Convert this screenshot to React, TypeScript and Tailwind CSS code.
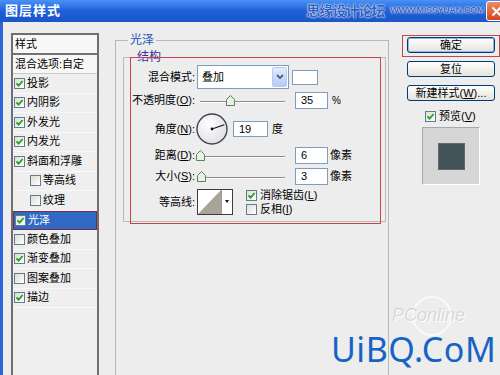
import type { ReactNode } from "react";

// Left list of layer styles
const layerStyles = [
  { name: "投影", checked: true },
  { name: "内阴影", checked: true },
  { name: "外发光", checked: true },
  { name: "内发光", checked: true },
  { name: "斜面和浮雕", checked: true },
  { name: "等高线", checked: false, indent: true },
  { name: "纹理", checked: false, indent: true },
  { name: "光泽", checked: true, selected: true },
  { name: "颜色叠加", checked: false },
  { name: "渐变叠加", checked: true },
  { name: "图案叠加", checked: false },
  { name: "描边", checked: true },
];

// XP style checkbox
function Check({ checked }: { checked: boolean }) {
  return (
    <span className="flex h-[11px] w-[11px] shrink-0 items-center justify-center border border-[#5d7d92] bg-linear-to-br from-[#dedcd4] to-white">
      {checked && (
        <svg width="9" height="9" viewBox="0 0 9 9">
          <path d="M1.5 4.3 L3.6 6.6 L7.6 2" fill="none" stroke="#21a121" strokeWidth="1.8" />
        </svg>
      )}
    </span>
  );
}

// Small underlined mnemonic, e.g. (O)
function Key({ k }: { k: string }) {
  return (
    <>
      (<span className="underline">{k}</span>)
    </>
  );
}

function TitleBar() {
  return (
    <div className="flex h-[22px] shrink-0 items-center bg-linear-to-b from-[#4a92f5] via-[#1f60d8] to-[#1b55c9] pl-[5px]">
      <span className="text-[13px] font-bold tracking-[1px] text-white">图层样式</span>
      <div className="ml-auto flex items-center gap-[6px] pr-[2px]">
        <span className="text-[14px] font-bold tracking-[-1px] text-[#2d5fc2] [text-shadow:0_0_2px_#fff,0_0_1px_#fff]">
          思缘设计论坛
        </span>
        <span className="text-[9px] font-bold tracking-[-0.3px] text-[#2d5fc2] [text-shadow:0_0_2px_#fff,0_0_1px_#fff]">
          WWW.MISSYUAN.COM
        </span>
      </div>
      <div className="-mr-[7px] flex h-[20px] w-[21px] shrink-0 items-center justify-center rounded-[3px] border border-white bg-linear-to-b from-[#f08a5c] to-[#d4431c]">
        <svg width="11" height="11" viewBox="0 0 11 11">
          <path d="M1.5 1.5 L9.5 9.5 M9.5 1.5 L1.5 9.5" stroke="#fff" strokeWidth="2" />
        </svg>
      </div>
    </div>
  );
}

function StyleList() {
  return (
    <div className="ml-[8px] mt-[11px] h-[350px] w-[88px] shrink-0 border-2 border-[#6f6f6f] bg-[#efefef] text-[11px] leading-none text-black">
      <div className="flex h-[20px] items-center border-b-2 border-[#737373] bg-[#f7f7f7] pl-[2px]">样式</div>
      <div className="flex h-[19px] items-center border-b border-[#c9c9c9] bg-[#f7f7f7] pl-[2px]">混合选项:自定</div>
      {layerStyles.map((item, index) => (
        <div
          key={index}
          className={
            item.selected
              ? "flex h-[19.5px] items-center gap-[2px] border border-[#7b2a4c] bg-[#316ac5] pl-[1px] text-white"
              : "flex h-[19.5px] items-center gap-[2px] border-b border-[#f9f9f9] " + (item.indent ? "pl-[17px]" : "pl-[1px]")
          }
        >
          <Check checked={item.checked} />
          <span>{item.name}</span>
        </div>
      ))}
    </div>
  );
}

// Horizontal slider, thumb place taken from the value
function Slider({ value, max }: { value: number; max: number }) {
  return (
    <div className="relative ml-[5px] h-[12px] w-[85px]">
      <div className="absolute left-0 right-0 top-[6px] h-[2px] border-t border-b border-t-[#8d8d8d] border-b-white" />
      <svg
        className="absolute top-0"
        style={{ left: (value / max) * 85 - 4 }}
        width="9"
        height="11"
        viewBox="0 0 9 11"
      >
        <path d="M0.5 4.5 L4.5 0.5 L8.5 4.5 L8.5 10.5 L0.5 10.5 Z" fill="#e6f4df" stroke="#5f7f62" strokeWidth="1" />
      </svg>
    </div>
  );
}

function NumberBox({ value, width, className }: { value: string; width: string; className?: string }) {
  return (
    <div className={"flex items-center border border-[#7f9db9] bg-white pl-[5px] text-[11px] " + width + " " + (className ?? "")}>
      {value}
    </div>
  );
}

function Row({ label, className, children }: { label: ReactNode; className: string; children: ReactNode }) {
  return (
    <div className={"flex items-center " + className}>
      <span className="w-[71px] shrink-0 text-right">{label}</span>
      {children}
    </div>
  );
}

function GlossPanel() {
  return (
    <fieldset className="ml-[16px] mt-[10px] h-[360px] w-[274px] shrink-0 border border-[#b9b9b9] p-0">
      <legend className="ml-[12px] px-[2px] text-[12px] leading-[16px] text-[#2454b8]">光泽</legend>
      <fieldset className="ml-[7px] mr-[2px] mt-[1px] border border-[#b9b9b9] p-0 pb-[6px] text-[11px] leading-none">
        <legend className="ml-[11px] px-[2px] text-[12px] leading-[16px] text-[#3a2fa0]">结构</legend>

        <Row label="混合模式:" className="h-[24px]">
          <div className="ml-[2px] flex h-[24px] w-[92px] items-center border border-[#7f9db9] bg-white pl-[4px]">
            <span>叠加</span>
            <div className="ml-auto mr-[1px] flex h-[20px] w-[15px] items-center justify-center rounded-[2px] border border-[#b8c9f2] bg-linear-to-b from-[#e3ebfd] to-[#b6cbf7]">
              <svg width="8" height="6" viewBox="0 0 8 6">
                <path d="M1 1 L4 4 L7 1" fill="none" stroke="#4d6185" strokeWidth="1.8" />
              </svg>
            </div>
          </div>
          <div className="ml-[3px] h-[15px] w-[26px] border border-[#7f9db9] bg-white" />
        </Row>

        <Row label={<>不透明度<Key k="O" />:</>} className="mt-[3px] h-[17px]">
          <Slider value={35} max={100} />
          <NumberBox value="35" width="w-[33px]" className="ml-[10px] h-[17px]" />
          <span className="ml-[4px] text-[10px]">%</span>
        </Row>

        <Row label={<>角度<Key k="N" />:</>} className="mt-[4px] h-[32px]">
          <svg className="ml-[1px]" width="32" height="32" viewBox="0 0 32 32">
            <defs>
              <radialGradient id="dial" cx="40%" cy="35%" r="70%">
                <stop offset="0" stopColor="#ffffff" />
                <stop offset="1" stopColor="#dedfe4" />
              </radialGradient>
            </defs>
            <circle cx="16" cy="16" r="15" fill="url(#dial)" stroke="#3e4450" strokeWidth="1.4" />
            <line x1="16" y1="16" x2="28.3" y2="11.8" stroke="#111" strokeWidth="1.2" />
            <circle cx="16" cy="16" r="1.4" fill="#111" />
          </svg>
          <NumberBox value="19" width="w-[35px]" className="ml-[5px] h-[16px]" />
          <span className="ml-[4px]">度</span>
        </Row>

        <Row label={<>距离<Key k="D" />:</>} className="mt-[2px] h-[17px]">
          <Slider value={6} max={3000} />
          <NumberBox value="6" width="w-[33px]" className="ml-[10px] h-[17px]" />
          <span className="ml-[2px]">像素</span>
        </Row>

        <Row label={<>大小<Key k="S" />:</>} className="mt-[4px] h-[17px]">
          <Slider value={3} max={250} />
          <NumberBox value="3" width="w-[33px]" className="ml-[10px] h-[17px]" />
          <span className="ml-[2px]">像素</span>
        </Row>

        <Row label="等高线:" className="mt-[4px] h-[26px]">
          <svg className="ml-[2px]" width="36" height="26" viewBox="0 0 36 26">
            <rect x="0.5" y="0.5" width="35" height="25" fill="#fff" stroke="#3c3c3c" />
            <polygon points="1,25 24,1 24,25" fill="#aaa397" />
            <line x1="24.5" y1="1" x2="24.5" y2="25" stroke="#9a9a9a" />
            <polygon points="28,11 32,11 30,14" fill="#111" />
          </svg>
          <div className="ml-[13px] flex flex-col gap-[3px]">
            <div className="flex items-center gap-[3px]">
              <Check checked />
              <span>消除锯齿<Key k="L" /></span>
            </div>
            <div className="flex items-center gap-[3px]">
              <Check checked={false} />
              <span>反相<Key k="I" /></span>
            </div>
          </div>
        </Row>
      </fieldset>
    </fieldset>
  );
}

function XpButton({ children, isDefault }: { children: ReactNode; isDefault?: boolean }) {
  return (
    <div
      className={
        "flex h-[16px] w-[88px] items-center justify-center rounded-[3px] border border-[#003c74] bg-linear-to-b from-white to-[#e4e3dc] text-[11px] leading-none text-black " +
        (isDefault ? "shadow-[inset_0_0_0_1px_#98b4e6]" : "")
      }
    >
      {children}
    </div>
  );
}

function ActionColumn() {
  return (
    <div className="ml-[18px] mt-[15px] flex w-[88px] shrink-0 flex-col text-[11px] leading-none">
      <XpButton isDefault>确定</XpButton>
      <div className="mt-[8px]">
        <XpButton>复位</XpButton>
      </div>
      <div className="mt-[8px]">
        <XpButton>
          新建样式<Key k="W" />...
        </XpButton>
      </div>
      <div className="mt-[8px] flex h-[14px] items-center gap-[3px] pl-[18px]">
        <Check checked />
        <span>预览<Key k="V" /></span>
      </div>
      <div className="ml-[15px] mt-[4px] flex h-[58px] w-[58px] items-center justify-center border border-t-[#a8a8a8] border-l-[#a8a8a8] border-r-white border-b-white bg-[#d6d6d6]">
        <div className="h-[27px] w-[27px] border border-[#5d6a70] bg-[#45545b]" />
      </div>
    </div>
  );
}

export default function App() {
  return (
    <div className="relative flex h-[375px] w-[500px] flex-col overflow-hidden bg-[#ededed] font-['Liberation_Sans','Noto_Sans_CJK_SC',sans-serif]">
      <TitleBar />
      <div className="flex min-h-0 flex-1 border-l-[3px] border-[#2b64d6]">
        <StyleList />
        <GlossPanel />
        <ActionColumn />
      </div>

      {/* tutorial highlights */}
      <div className="pointer-events-none absolute left-[130px] top-[57px] h-[167px] w-[251px] border-[1.5px] border-[#c9434d]" />
      <div className="pointer-events-none absolute left-[402px] top-[35px] h-[22px] w-[98px] border-[1.5px] border-[#c9434d]" />

      {/* watermarks */}
      <div className="pointer-events-none absolute left-[412px] top-[296px] h-[40px] w-[40px] rounded-full border-2 border-[#f8f8f8]" />
      <span className="pointer-events-none absolute left-[392px] top-[306px] text-[18px] leading-none italic text-[#d9d9d9] [text-shadow:1px_1px_0_#fff]">
        PConline
      </span>
      <span className="pointer-events-none absolute left-[331px] top-[332px] font-['Noto_Sans',sans-serif] text-[34px] leading-none tracking-[0.5px] text-[#1663c7]">
        UiBQ.CoM
      </span>
    </div>
  );
}
